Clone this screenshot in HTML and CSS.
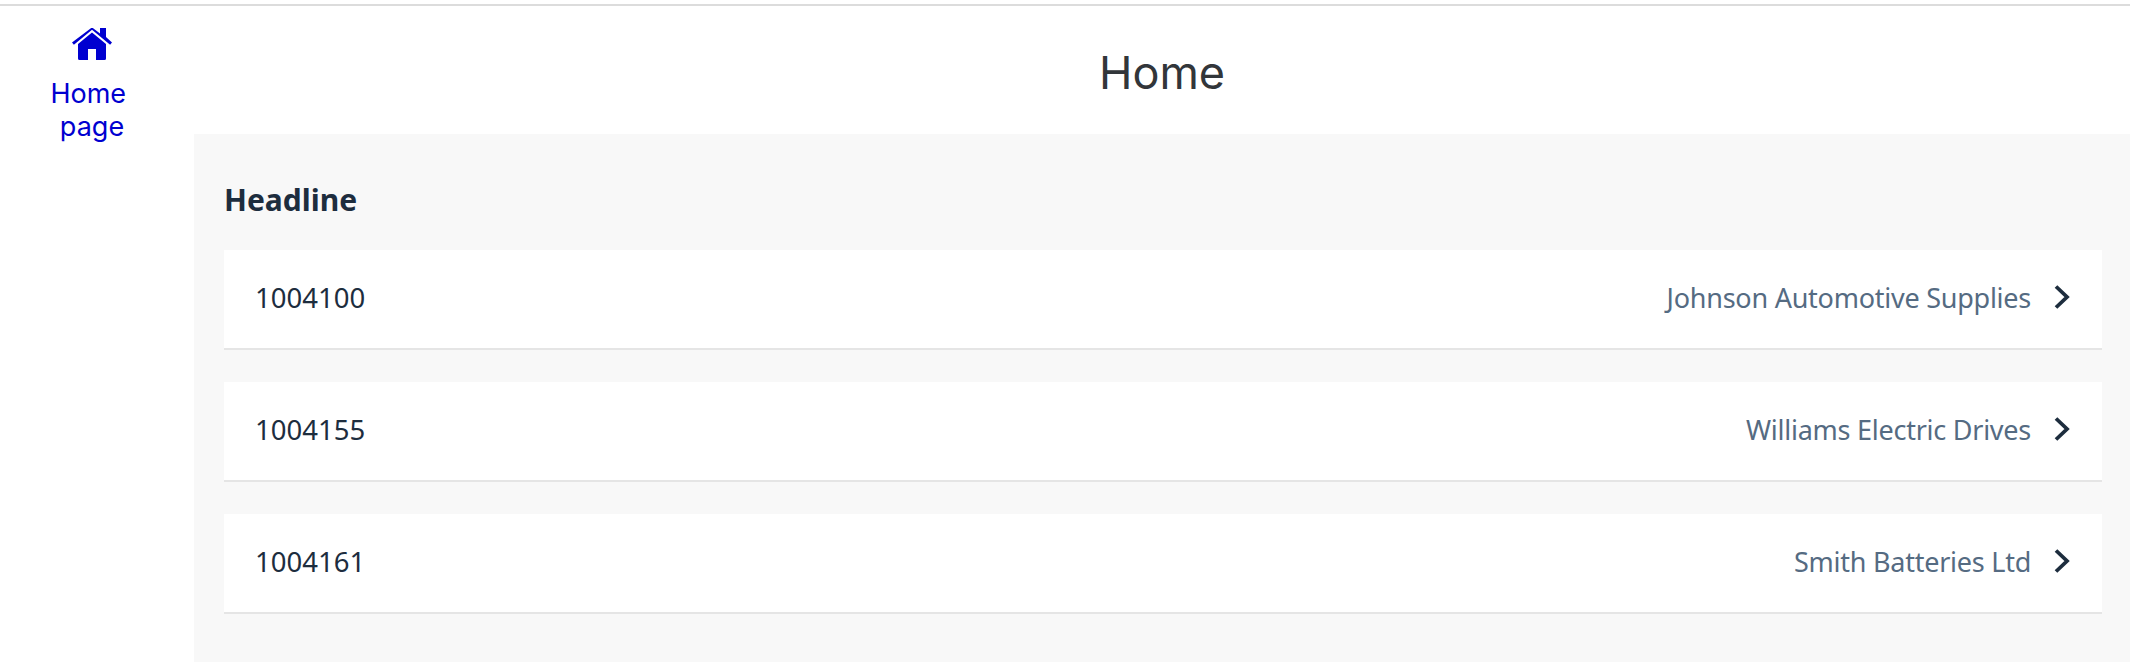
FILE: index.html
```html
<!DOCTYPE html>
<html lang="en">
<head>
  <meta charset="UTF-8" />
  <title>Home</title>
  <link rel="stylesheet" href="styles.css">
</head>
<body>
  <div class="layout">
    <nav class="sidebar">
      <a class="nav-link" href="#">
        <svg class="nav-icon" viewBox="0 0 40 32" width="40" height="32">
          <path d="M28 0h6v9l6 5.4-1.900 2.300L20 1.800 1.900 16.700 0 14.400 20-.6l8 6z" fill="currentColor"/>
          <path d="M20 4.600l14 11.500V30.500q0 1.500-1.500 1.500H24V21h-8v11H7.500Q6 32 6 30.500V16.100z" fill="currentColor"/>
        </svg>
        <span class="nav-label">Home 
page</span>
      </a>
    </nav>
    <div class="content">
      <header class="page-title">Home</header>
      <main class="panel">
        <h2 class="panel-head">Headline</h2>
        <ul class="list">
          <li class="list-row">
            <span class="row-id">1004100</span>
            <span class="row-name">Johnson Automotive Supplies</span>
            <svg class="chevron" viewBox="0 0 16 24" width="16" height="24"><path d="M2 1.500 13 12 2 22.500" fill="none" stroke="currentColor" stroke-width="3.800"/></svg>
          </li>
          <li class="list-row">
            <span class="row-id">1004155</span>
            <span class="row-name">Williams Electric Drives</span>
            <svg class="chevron" viewBox="0 0 16 24" width="16" height="24"><path d="M2 1.500 13 12 2 22.500" fill="none" stroke="currentColor" stroke-width="3.800"/></svg>
          </li>
          <li class="list-row">
            <span class="row-id">1004161</span>
            <span class="row-name">Smith Batteries Ltd</span>
            <svg class="chevron" viewBox="0 0 16 24" width="16" height="24"><path d="M2 1.500 13 12 2 22.500" fill="none" stroke="currentColor" stroke-width="3.800"/></svg>
          </li>
        </ul>
      </main>
    </div>
  </div>
</body>
</html>
```

FILE: styles.css
```css
html, body {
  height: 100%;
}
body {
  margin: 0;
  background: white;
  font-family: "Noto Sans", Arial, sans-serif;
  overflow: hidden;
}
.layout {
  display: flex;
  height: 658px;
  margin-top: 4px;
  border-top: 2px solid #dcdcdc;
}
.sidebar {
  width: 194px;
  flex: none;
  padding-top: 22px;
  box-sizing: border-box;
}
.nav-link {
  display: flex;
  flex-direction: column;
  align-items: center;
  color: #0000d0;
  text-decoration: none;
  width: 184px;
}
.nav-icon {
  display: block;
  margin-bottom: 17px;
}
.nav-label {
  font-family: Inter, sans-serif;
  font-size: 27px;
  line-height: 33px;
  white-space: pre-wrap;
  text-align: center;
}
.content {
  flex: 1;
  display: flex;
  flex-direction: column;
  min-width: 0;
}
.page-title {
  height: 128px;
  line-height: 134px;
  text-align: center;
  font-family: Inter, sans-serif;
  font-size: 45px;
  color: #32363a;
}
.panel {
  flex: 1;
  background: #f8f8f8;
  padding: 0 28px 0 30px;
}
.panel-head {
  margin: 0;
  padding-top: 46px;
  height: 70px;
  line-height: 40px;
  font-size: 30px;
  font-weight: 700;
  color: #1d2d3e;
}
.list {
  list-style: none;
  margin: 0;
  padding: 0;
}
.list-row {
  display: flex;
  align-items: center;
  box-sizing: border-box;
  height: 100px;
  margin-bottom: 32px;
  padding: 0 32px 4px 31px;
  background: white;
  border-bottom: 2px solid #e5e5e5;
}
.row-id {
  flex: 1;
  font-size: 27.500px;
  color: #1d2d3e;
}
.row-name {
  font-size: 27px;
  letter-spacing: -0.25px;
  color: #556b82;
  margin-right: 23px;
}
.chevron {
  flex: none;
  color: #1d2d3e;
}
```
